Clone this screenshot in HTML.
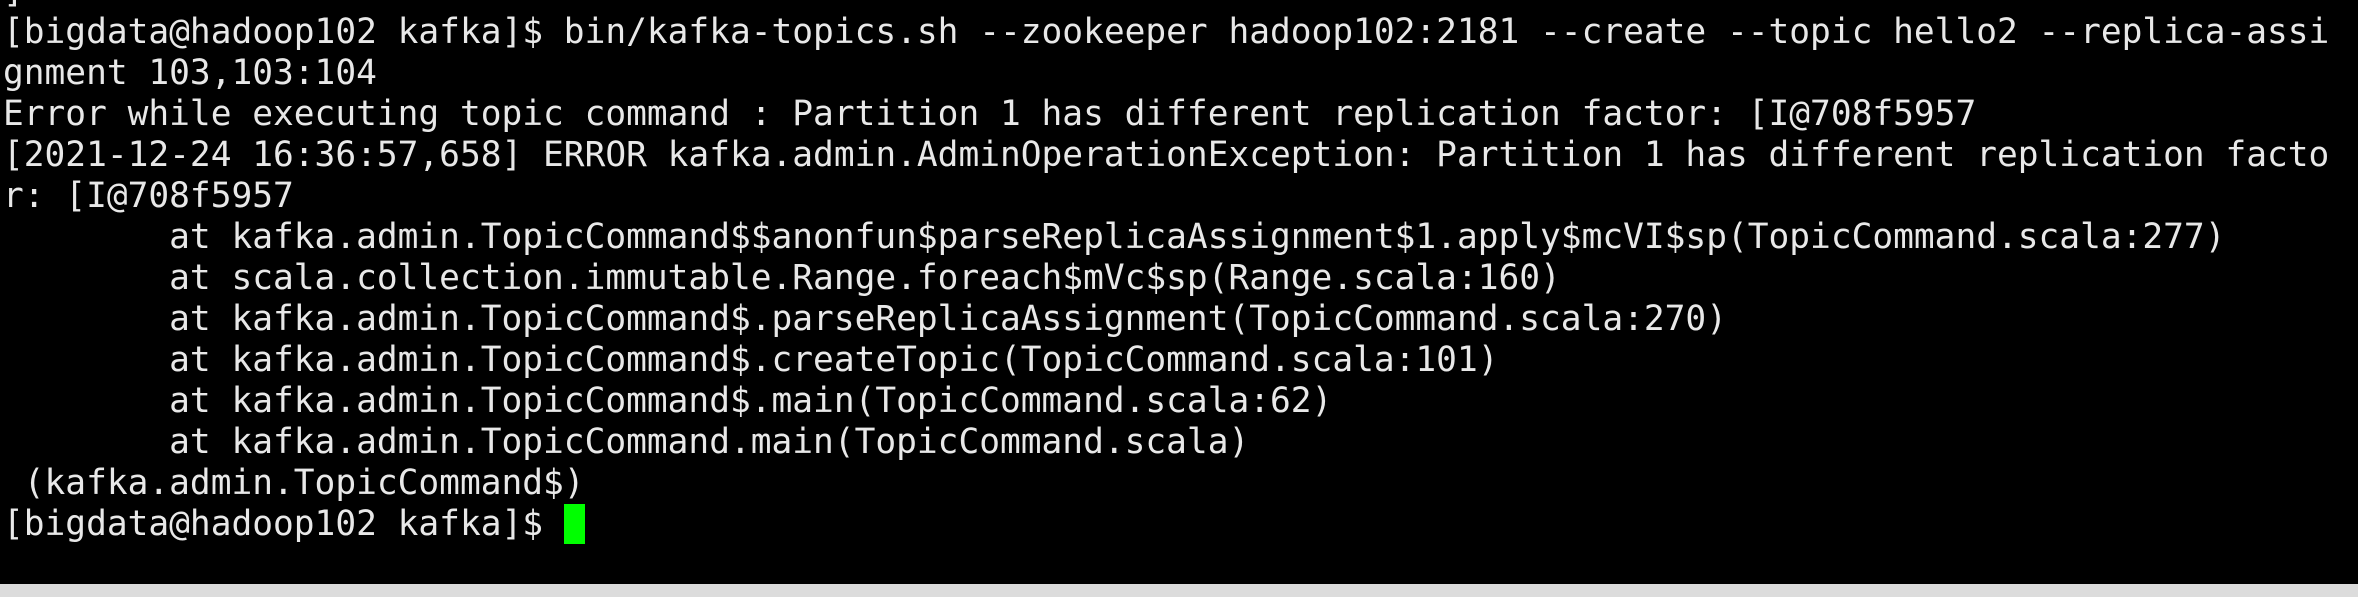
<!DOCTYPE html>
<html><head><meta charset="utf-8"><style>
html,body{margin:0;padding:0;background:#000;width:2358px;height:597px;overflow:hidden}
#t{position:absolute;left:3px;top:-29px;font-family:"DejaVu Sans Mono","Liberation Mono",monospace;font-size:34.5px;line-height:41px;color:#e8e8e8;white-space:pre;margin:0}
.cur{display:inline-block;width:21px;height:40px;background:#00ff00;vertical-align:-9px}
#sb{position:absolute;left:0;top:584px;width:2358px;height:13px;background:#dcdcdc;overflow:hidden}
</style></head><body>
<pre id="t">]
[bigdata@hadoop102 kafka]$ bin/kafka-topics.sh --zookeeper hadoop102:2181 --create --topic hello2 --replica-assi
gnment 103,103:104
Error while executing topic command : Partition 1 has different replication factor: [I@708f5957
[2021-12-24 16:36:57,658] ERROR kafka.admin.AdminOperationException: Partition 1 has different replication facto
r: [I@708f5957
        at kafka.admin.TopicCommand$$anonfun$parseReplicaAssignment$1.apply$mcVI$sp(TopicCommand.scala:277)
        at scala.collection.immutable.Range.foreach$mVc$sp(Range.scala:160)
        at kafka.admin.TopicCommand$.parseReplicaAssignment(TopicCommand.scala:270)
        at kafka.admin.TopicCommand$.createTopic(TopicCommand.scala:101)
        at kafka.admin.TopicCommand$.main(TopicCommand.scala:62)
        at kafka.admin.TopicCommand.main(TopicCommand.scala)
 (kafka.admin.TopicCommand$)
[bigdata@hadoop102 kafka]$ <span class="cur"></span></pre>
<div id="sb"></div>
</body></html>
